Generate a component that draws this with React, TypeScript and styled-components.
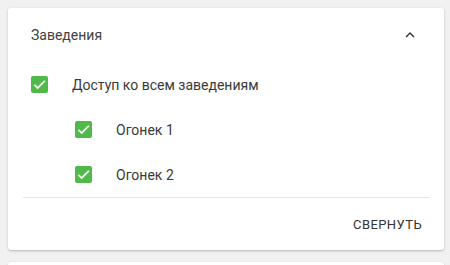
import styled, { createGlobalStyle } from "styled-components"
import { useState } from "react"

const Global = createGlobalStyle`
  body {
    margin: 0;
    background: #f1f1f1;
    font-family: Roboto, "Liberation Sans", sans-serif;
  }
`

const Page = styled.div`
  padding: 8px 6px 0 8px;
  height: 265px;
  box-sizing: border-box;
  overflow: hidden;
`

const Card = styled.div`
  background: #fff;
  border-radius: 3px;
  box-shadow: 0 1px 3px rgba(0, 0, 0, 0.18), 0 1px 1px rgba(0, 0, 0, 0.08);
  height: 242px;
  display: flex;
  flex-direction: column;
`

const NextCard = styled.div`
  margin-top: 12px;
  background: #fff;
  border-radius: 3px;
  height: 20px;
  box-shadow: 0 1px 3px rgba(0, 0, 0, 0.18);
`

const Header = styled.div`
  height: 54px;
  display: flex;
  align-items: center;
  justify-content: space-between;
  padding: 0 25px 0 23px;
`

const HeaderTitle = styled.span`
  font-size: 14px;
  color: #424242;
`

const Toggle = styled.button`
  border: none;
  background: none;
  padding: 0;
  display: flex;
  cursor: pointer;
  color: #333;
`

const Row = styled.label<{ $level: number }>`
  height: 45px;
  display: flex;
  align-items: center;
  padding-left: ${(p) => 23 + p.$level * 44}px;
  cursor: pointer;
`

const Box = styled.span`
  width: 17px;
  height: 17px;
  border-radius: 2px;
  background: #4fba4a;
  display: flex;
  align-items: center;
  justify-content: center;
  margin-right: 24px;
`

const RowText = styled.span`
  font-size: 14px;
  color: #3a3a3a;
`

const Body = styled.div`
  display: flex;
  flex-direction: column;
`

const Divider = styled.div`
  height: 1px;
  background: #e6e6e6;
  margin: 0 15px;
`

const Footer = styled.div`
  flex: 1;
  display: flex;
  align-items: center;
  justify-content: flex-end;
  padding: 0 22px 0 0;
`

const TextButton = styled.button`
  border: none;
  background: none;
  padding: 0;
  font-family: Roboto, "Liberation Sans", sans-serif;
  font-size: 13px;
  font-weight: 400;
  letter-spacing: 0.4px;
  color: #333;
  text-transform: uppercase;
  cursor: pointer;
`

const Check = () => (
  <Box>
    <svg width="15" height="15" viewBox="0 0 24 24">
      <path d="M9 16.17L4.83 12l-1.42 1.41L9 19 21 7l-1.41-1.41z" fill="#fff" stroke="#fff" strokeWidth="0.8" />
    </svg>
  </Box>
)

const items = [
  { label: "Доступ ко всем заведениям", level: 0 },
  { label: "Огонек 1", level: 1 },
  { label: "Огонек 2", level: 1 },
]

const App = () => {
  const [open, setOpen] = useState(true)

  return (
    <Page>
      <Global />
      <Card>
        <Header>
          <HeaderTitle>Заведения</HeaderTitle>
          <Toggle onClick={() => setOpen(!open)}>
            <svg width="18" height="18" viewBox="0 0 24 24">
              <path
                d={open ? "M7.41 15.41L12 10.83l4.59 4.58L18 14l-6-6-6 6z" : "M7.41 8.59L12 13.17l4.59-4.58L18 10l-6 6-6-6z"}
                fill="currentColor"
              />
            </svg>
          </Toggle>
        </Header>
        {open && (
          <Body>
            {items.map((it) => (
              <Row key={it.label} $level={it.level}>
                <Check />
                <RowText>{it.label}</RowText>
              </Row>
            ))}
          </Body>
        )}
        <Divider />
        <Footer>
          <TextButton onClick={() => setOpen(!open)}>Свернуть</TextButton>
        </Footer>
      </Card>
      <NextCard />
    </Page>
  )
}

export default App
